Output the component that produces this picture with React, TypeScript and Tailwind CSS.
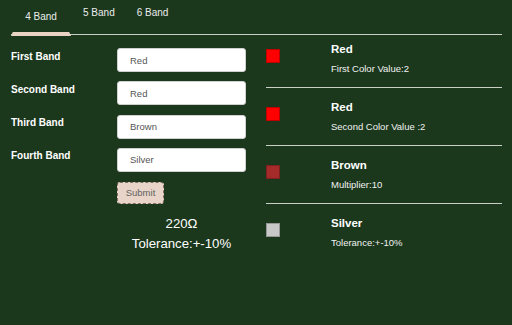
import React from "react";

const bands = [
  { label: "First Band", value: "Red" },
  { label: "Second Band", value: "Red" },
  { label: "Third Band", value: "Brown" },
  { label: "Fourth Band", value: "Silver" },
];

const results = [
  { name: "Red", detail: "First Color Value:2", swatch: "bg-[#ff0000]" },
  { name: "Red", detail: "Second Color Value :2", swatch: "bg-[#ff0000]" },
  { name: "Brown", detail: "Multiplier:10", swatch: "bg-[#a52a2a]" },
  { name: "Silver", detail: "Tolerance:+-10%", swatch: "bg-[#c8c8c8]" },
];

export default function App() {
  return (
    <div className="h-[325px] w-full overflow-hidden bg-[#1b381d] font-['Liberation_Sans',Arial,sans-serif] text-white">
      {/* Tabs */}
      <div className="ml-[11px] mr-[10px] flex h-[35px] items-start border-b border-[#c9cfc6]">
        <div className="relative flex h-[35px] w-[60px] justify-center pt-[11px] text-[10px] leading-[12px] text-[#ececec]">
          4 Band
          <div className="absolute bottom-[-1px] left-0 h-[4px] w-[60px] bg-[#e9d4c3] [clip-path:polygon(3%_0,97%_0,100%_100%,0_100%)]" />
        </div>
        <div className="px-[12px] pt-[7px] text-[10px] leading-[12px] text-[#ececec]">5 Band</div>
        <div className="px-[10px] pt-[7px] text-[10px] leading-[12px] text-[#ececec]">6 Band</div>
      </div>

      <div className="flex items-start pl-[11px] pr-[10px]">
        {/* Form */}
        <div className="grid w-[235px] grid-cols-[106px_129px] gap-y-[9.3px] pt-[13px]">
          {bands.map((b) => (
            <React.Fragment key={b.label}>
              <div className="pt-[2.5px] text-[10px] font-bold leading-[12px]">{b.label}</div>
              <input
                readOnly
                defaultValue={b.value}
                className="h-[24px] w-[129px] rounded-[3px] border border-[#d0d0d0] bg-white pl-[12px] text-[9.5px] text-[#555] outline-none"
              />
            </React.Fragment>
          ))}
          <div />
          <div className="flex flex-col">
            <button className="mt-[1px] h-[22px] w-[47px] rounded-[3px] border border-dashed border-[#7d7066] bg-[#e8d4c8] text-[9.5px] text-[#626262]">
              Submit
            </button>
            <div className="mt-[9.5px] text-center text-[13.2px] leading-[20px]">
              <div>220Ω</div>
              <div>Tolerance:+-10%</div>
            </div>
          </div>
        </div>

        {/* Results */}
        <div className="ml-[20px] flex-1">
          {results.map((r, i) => (
            <div
              key={i}
              className={`flex items-start ${i === 0 ? "pt-[7px]" : "border-t border-[#c9cfc6] pt-[12px]"} pb-[12px]`}
            >
              <div className={`mt-[7px] h-[14px] w-[14px] border border-black/25 ${r.swatch}`} />
              <div className="ml-[51px]">
                <div className="text-[11.5px] font-bold leading-[14px]">{r.name}</div>
                <div className="mt-[7px] text-[9.5px] leading-[12px] text-[#f2f2f2]">{r.detail}</div>
              </div>
            </div>
          ))}
        </div>
      </div>
    </div>
  );
}
